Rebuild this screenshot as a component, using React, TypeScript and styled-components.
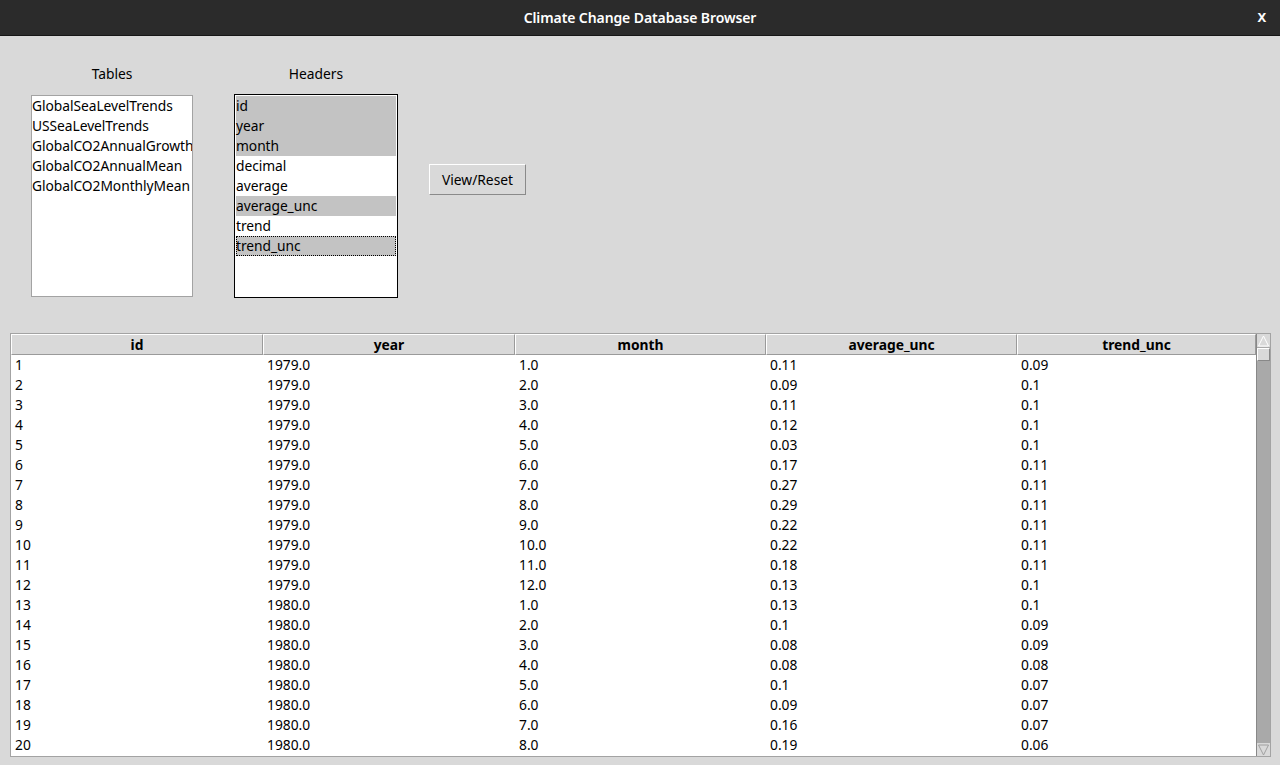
import React from "react";
import styled, { createGlobalStyle } from "styled-components";

const Global = createGlobalStyle`
  html, body { margin: 0; padding: 0; }
  body {
    width: 1280px; height: 765px; overflow: hidden;
    background: #d9d9d9;
    font-family: "Noto Sans", "Open Sans", sans-serif;
    font-size: 13.8px; color: #000;
  }
`;

const Window = styled.div`
  width: 1280px; height: 765px;
  display: flex; flex-direction: column;
  background: #d9d9d9;
`;

const TitleBar = styled.div`
  height: 35px; flex: none;
  background: #2b2b2b;
  border-bottom: 1px solid #161616;
  display: flex; align-items: center; justify-content: center;
  position: relative;
  color: #fff;
  font-family: "Noto Sans", sans-serif;
  font-weight: 600; font-size: 14px;
  letter-spacing: -0.1px;
`;

const CloseX = styled.span`
  position: absolute; right: 14px; top: 8px;
  font-size: 13px; font-weight: 700; color: #fff;
`;

const Top = styled.div`
  display: flex; align-items: flex-start;
  padding: 28px 0 0 31px;
`;

const Column = styled.div<{ $gap: number }>`
  display: flex; flex-direction: column; align-items: center;
  margin-right: ${(p) => p.$gap}px;
`;

const Label = styled.div`
  height: 20px; line-height: 20px;
  margin-bottom: 11px;
`;

const ListBox = styled.div<{ $focus?: boolean; $w: number; $h: number }>`
  box-sizing: border-box;
  width: ${(p) => p.$w}px; height: ${(p) => p.$h}px;
  background: #fff;
  border: 1px solid ${(p) => (p.$focus ? "#000" : "#a3a3a3")};
  padding: ${(p) => (p.$focus ? "1px" : "0")};
  margin-top: ${(p) => (p.$focus ? "-1px" : "0")};
  display: flex; flex-direction: column;
  overflow: hidden;
`;

const Item = styled.div<{ $sel?: boolean; $active?: boolean }>`
  box-sizing: border-box;
  height: 20px;
  white-space: nowrap;
  letter-spacing: -0.05px;
  background: ${(p) => (p.$sel ? "#c3c3c3" : "transparent")};
  border: ${(p) => (p.$active ? "1px dotted #000" : "none")};
  line-height: ${(p) => (p.$active ? "18px" : "20px")};
  text-indent: ${(p) => (p.$active ? "-1px" : "0")};
`;

const Button = styled.button`
  box-sizing: border-box;
  align-self: flex-start;
  margin-top: 100px;
  width: 97px; height: 31px;
  background: #d9d9d9;
  font-family: "Noto Sans", sans-serif; font-size: 13.8px; color: #000;
  border: 1px solid;
  border-color: #ffffff #8a8a8a #8a8a8a #ffffff;
  padding: 0;
`;

const Table = styled.div`
  margin: 35px 0 0 10px;
  width: 1261px; height: 424px;
  box-sizing: border-box;
  border: 1px solid #a3a3a3;
  display: flex;
  background: #fff;
`;

const Grid = styled.div`
  flex: 1;
  display: grid;
  grid-template-columns: 252px 252px 251px 251px 1fr;
  grid-auto-rows: 20px;
  align-content: start;
  padding-top: 1px;
`;

const HeadCell = styled.div`
  box-sizing: border-box;
  height: 21px;
  margin-top: -1px;
  background: #d9d9d9;
  border-top: 1px solid #ffffff;
  border-left: 1px solid #ffffff;
  border-right: 1px solid #9a9a9a;
  border-bottom: 1px solid #9a9a9a;
  font-weight: 700;
  text-align: center;
  line-height: 19px;
`;

const Cell = styled.div`
  padding-left: 4px;
  line-height: 20px;
  white-space: nowrap;
`;

const ScrollBar = styled.div`
  width: 13px; flex: none;
  background: #a9a9a9;
  border-left: 1px solid #888;
  display: flex; flex-direction: column;
`;

const Arrow = styled.div<{ $down?: boolean }>`
  height: 13px; flex: none;
  background: #d9d9d9;
  display: flex; align-items: center; justify-content: center;
  margin-top: ${(p) => (p.$down ? "auto" : "0")};
`;

const Thumb = styled.div`
  height: 13px; flex: none;
  box-sizing: border-box;
  background: #d9d9d9;
  border: 1px solid;
  border-color: #fff #888 #888 #fff;
  margin-top: 1px;
`;

const ArrowIcon = ({ down }: { down?: boolean }) => (
  <svg width="11" height="12" viewBox="0 0 11 12">
    {down ? (
      <polygon points="0.5,1 10.5,1 5.5,11" fill="#d9d9d9" stroke="#a0a0a0" strokeWidth="1" />
    ) : (
      <polygon points="5.5,1 10.5,11 0.5,11" fill="#d9d9d9" stroke="#ffffff" strokeWidth="1" />
    )}
  </svg>
);

const tables = [
  "GlobalSeaLevelTrends",
  "USSeaLevelTrends",
  "GlobalCO2AnnualGrowth",
  "GlobalCO2AnnualMean",
  "GlobalCO2MonthlyMean",
];

const headers: { name: string; sel: boolean; active?: boolean }[] = [
  { name: "id", sel: true },
  { name: "year", sel: true },
  { name: "month", sel: true },
  { name: "decimal", sel: false },
  { name: "average", sel: false },
  { name: "average_unc", sel: true },
  { name: "trend", sel: false },
  { name: "trend_unc", sel: true, active: true },
];

const avg = ["0.11","0.09","0.11","0.12","0.03","0.17","0.27","0.29","0.22","0.22","0.18","0.13","0.13","0.1","0.08","0.08","0.1","0.09","0.16","0.19"];
const trend = ["0.09","0.1","0.1","0.1","0.1","0.11","0.11","0.11","0.11","0.11","0.11","0.1","0.1","0.09","0.09","0.08","0.07","0.07","0.07","0.06"];

const rows = avg.map((a, i) => {
  const year = i < 12 ? "1979.0" : "1980.0";
  const month = ((i % 12) + 1).toFixed(1);
  return [String(i + 1), year, month, a, trend[i]];
});

const cols = ["id", "year", "month", "average_unc", "trend_unc"];

export default function App() {
  return (
    <>
      <Global />
      <Window>
        <TitleBar>
          Climate Change Database Browser
          <CloseX>X</CloseX>
        </TitleBar>
        <Top>
          <Column $gap={41}>
            <Label>Tables</Label>
            <ListBox $w={162} $h={202}>
              {tables.map((t) => (
                <Item key={t}>{t}</Item>
              ))}
            </ListBox>
          </Column>
          <Column $gap={31}>
            <Label>Headers</Label>
            <ListBox $focus $w={164} $h={204}>
              {headers.map((h) => (
                <Item key={h.name} $sel={h.sel} $active={h.active}>
                  {h.name}
                </Item>
              ))}
            </ListBox>
          </Column>
          <Button>View/Reset</Button>
        </Top>
        <Table>
          <Grid>
            {cols.map((c) => (
              <HeadCell key={c}>{c}</HeadCell>
            ))}
            {rows.map((r, i) =>
              r.map((v, j) => <Cell key={`${i}-${j}`}>{v}</Cell>)
            )}
          </Grid>
          <ScrollBar>
            <Arrow>
              <ArrowIcon />
            </Arrow>
            <Thumb />
            <Arrow $down>
              <ArrowIcon down />
            </Arrow>
          </ScrollBar>
        </Table>
      </Window>
    </>
  );
}
